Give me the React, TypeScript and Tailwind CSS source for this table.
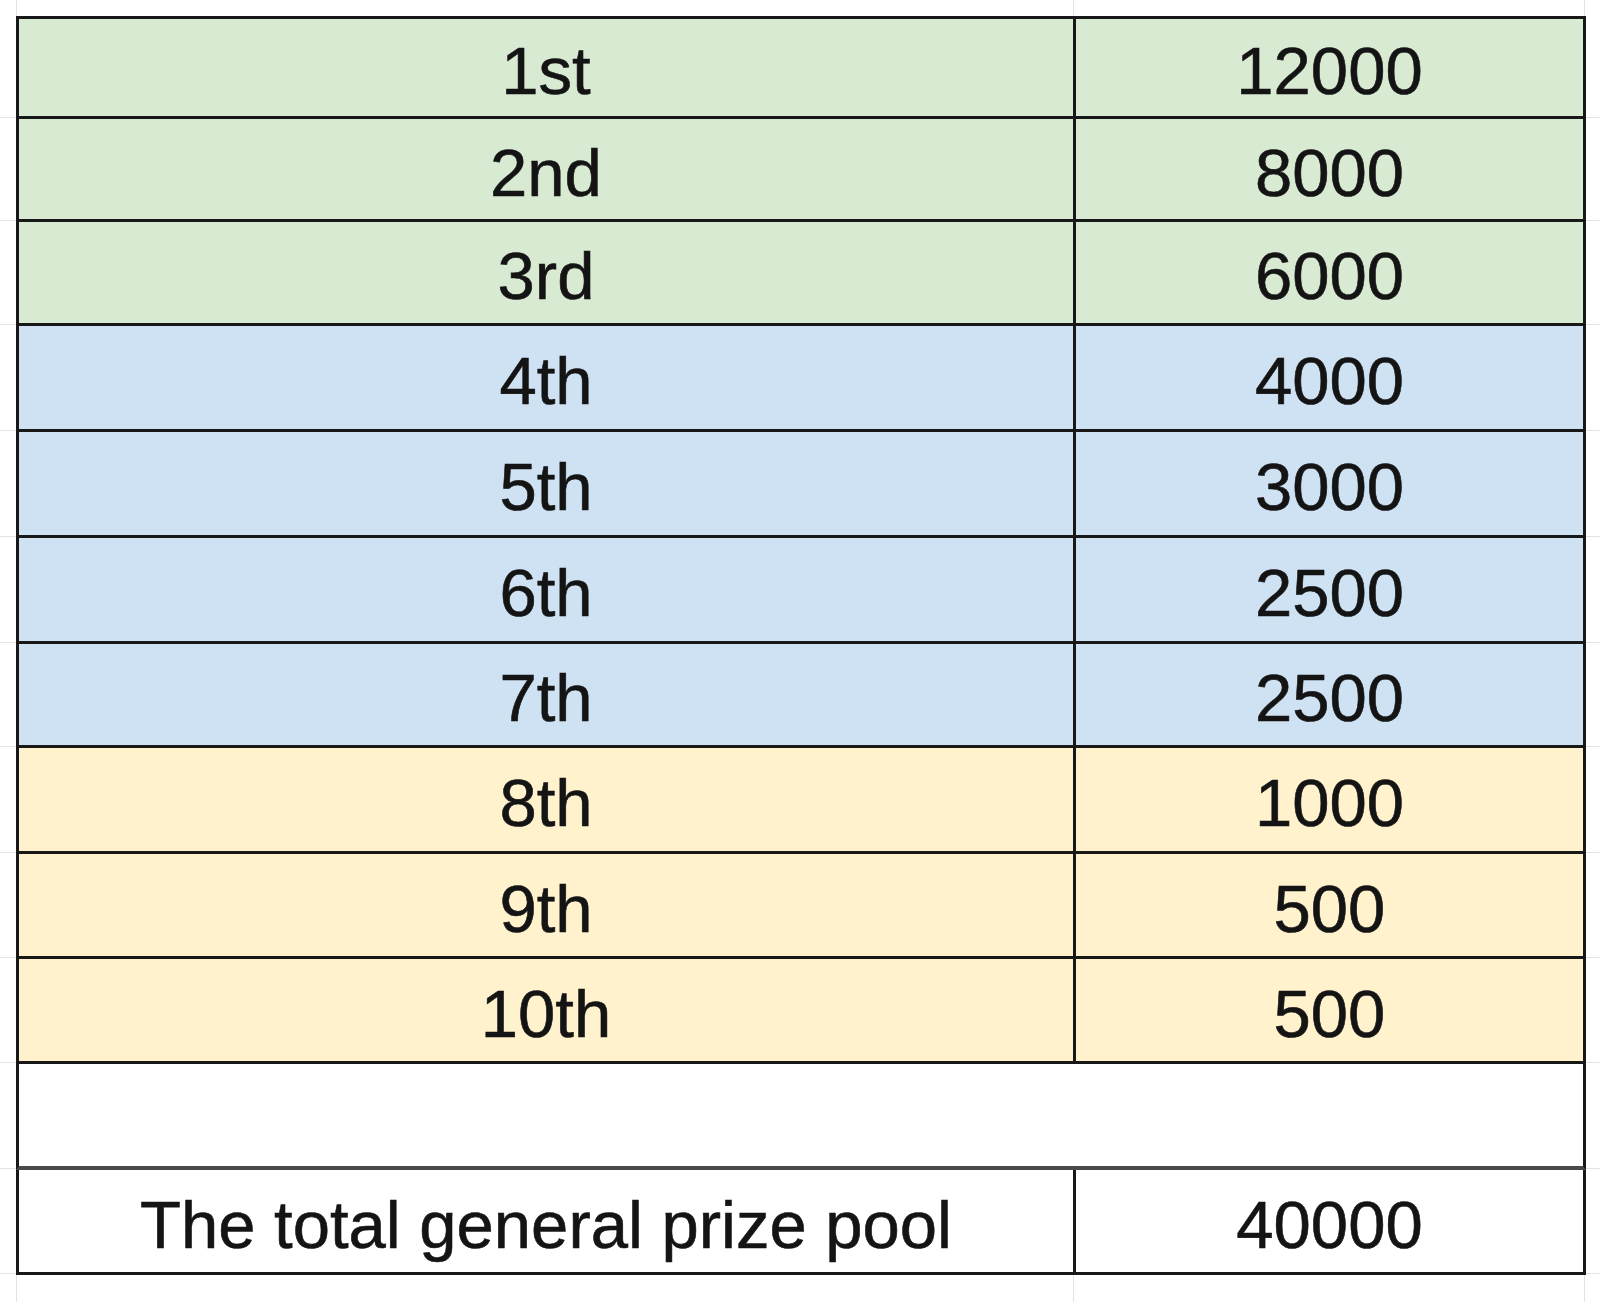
import React from "react";

type Row = { label: string; value: string; bg: string; h: string; top?: boolean };

const rows: Row[] = [
  { label: "1st", value: "12000", bg: "bg-[#d9ead3]", h: "h-[103px]", top: true },
  { label: "2nd", value: "8000", bg: "bg-[#d9ead3]", h: "h-[103px]" },
  { label: "3rd", value: "6000", bg: "bg-[#d9ead3]", h: "h-[104px]" },
  { label: "4th", value: "4000", bg: "bg-[#cfe2f3]", h: "h-[106px]" },
  { label: "5th", value: "3000", bg: "bg-[#cfe2f3]", h: "h-[106px]" },
  { label: "6th", value: "2500", bg: "bg-[#cfe2f3]", h: "h-[106px]" },
  { label: "7th", value: "2500", bg: "bg-[#cfe2f3]", h: "h-[104px]" },
  { label: "8th", value: "1000", bg: "bg-[#fff2cc]", h: "h-[106px]" },
  { label: "9th", value: "500", bg: "bg-[#fff2cc]", h: "h-[105px]" },
  { label: "10th", value: "500", bg: "bg-[#fff2cc]", h: "h-[105px]" },
];

export default function App() {
  return (
    <div className="w-[1600px] h-[1302px] bg-white flex flex-col overflow-hidden font-['Liberation_Sans',Arial,sans-serif] text-[67px] leading-none text-[#141414] [-webkit-text-stroke:0.6px_#141414]">
      {/* top strip with faint gridlines */}
      <div className="h-[16px] flex shrink-0">
        <div className="w-[17px] border-r border-[#e3e3e3]" />
        <div className="w-[1057px] border-r border-[#e3e3e3]" />
        <div className="w-[511px] border-r border-[#e3e3e3]" />
      </div>

      {rows.map((r, i) => (
        <div key={i} className={`flex shrink-0 ${r.h}`}>
          <div className="w-[16px] border-b border-[#e3e3e3] mb-[1px]" />
          <div
            className={`w-[1057px] border-l-[3px] border-b-[3px] border-[#181818] ${r.bg} flex items-center justify-center pt-[6px] ${r.top ? "border-t-[3px]" : ""}`}
          >
            {r.label}
          </div>
          <div
            className={`w-[513px] border-l-[3px] border-r-[3px] border-b-[3px] border-[#181818] ${r.bg} flex items-center justify-center pt-[6px] ${r.top ? "border-t-[3px]" : ""}`}
          >
            {r.value}
          </div>
          <div className="flex-1 border-b border-[#e3e3e3] mb-[1px]" />
        </div>
      ))}

      {/* empty merged row */}
      <div className="flex shrink-0 h-[106px]">
        <div className="w-[16px] border-b border-[#e3e3e3] mb-[1px]" />
        <div className="w-[1570px] border-l-[3px] border-r-[3px] border-b-[4px] border-l-[#181818] border-r-[#181818] border-b-[#4a4a4a] bg-white" />
        <div className="flex-1 border-b border-[#e3e3e3] mb-[1px]" />
      </div>

      {/* total row */}
      <div className="flex shrink-0 h-[105px]">
        <div className="w-[16px] border-b border-[#e3e3e3] mb-[1px]" />
        <div className="w-[1057px] border-l-[3px] border-b-[3px] border-[#181818] bg-white flex items-center justify-center pt-[6px]">
          The total general prize pool
        </div>
        <div className="w-[513px] border-l-[3px] border-r-[3px] border-b-[3px] border-[#181818] bg-white flex items-center justify-center pt-[6px]">
          40000
        </div>
        <div className="flex-1 border-b border-[#e3e3e3] mb-[1px]" />
      </div>

      {/* bottom strip */}
      <div className="flex-1 flex">
        <div className="w-[17px] border-r border-[#e3e3e3]" />
        <div className="w-[1057px] border-r border-[#e3e3e3]" />
        <div className="w-[511px] border-r border-[#e3e3e3]" />
      </div>
    </div>
  );
}
